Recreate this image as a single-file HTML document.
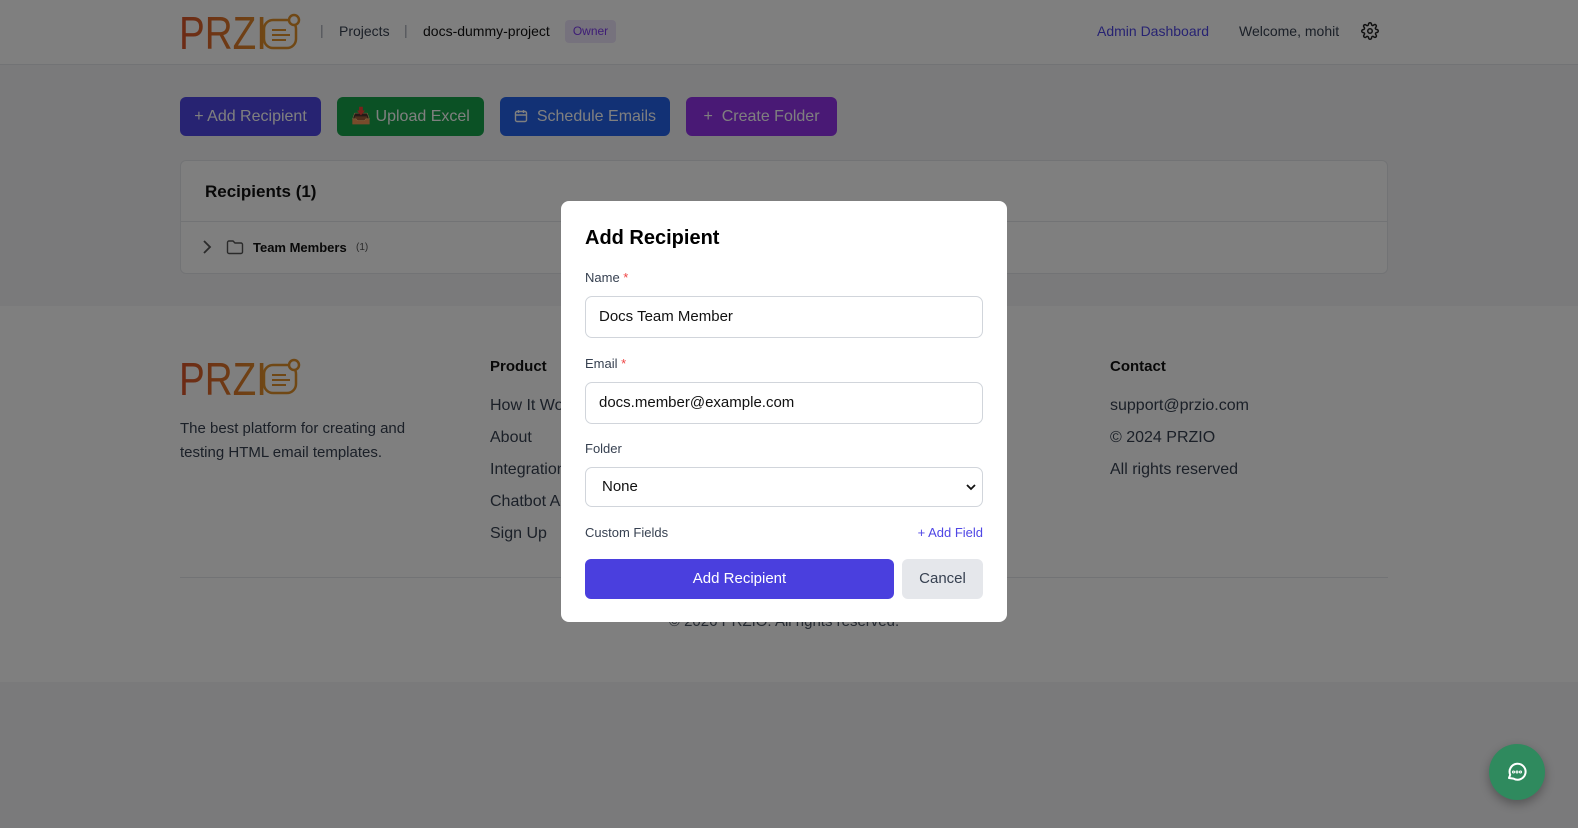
<!DOCTYPE html>
<html><head><meta charset="utf-8"><style>
*{box-sizing:border-box;margin:0;padding:0}
body{width:1578px;height:828px;overflow:hidden;font-family:"Liberation Sans",sans-serif;background:#f5f5f6;position:relative;color:#111}
.hdr{position:absolute;top:0;left:0;width:1578px;height:65px;background:#fff;border-bottom:1px solid #e5e7eb}
.logo{position:absolute;font-size:46px;line-height:46px;transform:scaleX(.84);transform-origin:left top;background:linear-gradient(90deg,#d9532a,#e0902a);-webkit-background-clip:text;color:transparent}
.abs{position:absolute;white-space:nowrap}
.btn{position:absolute;top:97px;height:39px;border-radius:6px;color:#fff;font-size:16px;line-height:39px;text-align:center}
.card{position:absolute;left:180px;top:160px;width:1208px;height:114px;background:#fff;border:1px solid #e5e7eb;border-radius:6px}
.footer{position:absolute;left:0;top:306px;width:1578px;height:376px;background:#fff}
.ov{position:absolute;inset:0;background:rgba(0,0,0,0.5)}
.modal{position:absolute;left:561px;top:201px;width:446px;height:421px;background:#fff;border-radius:8px}
.lbl{position:absolute;left:24px;font-size:13px;color:#374151}
.inp{position:absolute;left:24px;width:398px;height:42px;border:1px solid #d1d5db;border-radius:7px;font-size:15px;padding-left:13px;line-height:40px;color:#111}
.flink{font-size:16px;color:#374151}
</style></head><body>
<div class="hdr">
 <div class="logo abs" style="left:179px;top:10px">PRZI</div>
 <svg class="abs" style="left:262px;top:13px" width="40" height="37" viewBox="0 0 40 37"><rect x="2" y="7" width="32" height="28" rx="9" fill="none" stroke="#e0902a" stroke-width="2.5"/><circle cx="32" cy="7" r="5" fill="#fff" stroke="#e0902a" stroke-width="2.5"/><path d="M10 17h14M10 22h18M10 27h14" stroke="#e0902a" stroke-width="2"/></svg>
 <div class="abs" style="left:320px;top:22px;color:#9ca3af;font-size:14px">|</div>
 <div class="abs" style="left:339px;top:23px;color:#374151;font-size:14px">Projects</div>
 <div class="abs" style="left:404px;top:22px;color:#9ca3af;font-size:14px">|</div>
 <div class="abs" style="left:423px;top:23px;color:#111;font-size:14px">docs-dummy-project</div>
 <div class="abs" style="left:565px;top:20px;height:23px;width:51px;background:#ede4fb;border-radius:4px;color:#7c3aed;font-size:12px;text-align:center;line-height:23px">Owner</div>
 <div class="abs" style="left:1097px;top:23px;color:#4f46e5;font-size:14px">Admin Dashboard</div>
 <div class="abs" style="left:1239px;top:23px;color:#374151;font-size:14px">Welcome, mohit</div>
 <svg class="abs" style="left:1361px;top:22px" width="18" height="18" viewBox="0 0 24 24" fill="none" stroke="#222" stroke-width="2"><circle cx="12" cy="12" r="3"/><path d="M19.4 15a1.7 1.7 0 0 0 .3 1.8l.1.1a2 2 0 1 1-2.8 2.8l-.1-.1a1.7 1.7 0 0 0-1.8-.3 1.7 1.7 0 0 0-1 1.5V21a2 2 0 1 1-4 0v-.1a1.7 1.7 0 0 0-1.1-1.5 1.7 1.7 0 0 0-1.8.3l-.1.1a2 2 0 1 1-2.8-2.8l.1-.1a1.7 1.7 0 0 0 .3-1.8 1.7 1.7 0 0 0-1.5-1H3a2 2 0 1 1 0-4h.1a1.7 1.7 0 0 0 1.5-1.1 1.7 1.7 0 0 0-.3-1.8l-.1-.1a2 2 0 1 1 2.8-2.8l.1.1a1.7 1.7 0 0 0 1.8.3H9a1.7 1.7 0 0 0 1-1.5V3a2 2 0 1 1 4 0v.1a1.7 1.7 0 0 0 1 1.5 1.7 1.7 0 0 0 1.8-.3l.1-.1a2 2 0 1 1 2.8 2.8l-.1.1a1.7 1.7 0 0 0-.3 1.8V9a1.7 1.7 0 0 0 1.5 1H21a2 2 0 1 1 0 4h-.1a1.7 1.7 0 0 0-1.5 1z"/></svg>
</div>
<div class="btn" style="left:180px;width:141px;background:#4f46e5">+ Add Recipient</div>
<div class="btn" style="left:337px;width:147px;background:#16a34a">📥 Upload Excel</div>
<div class="btn" style="left:500px;width:170px;background:#2563eb"><svg style="vertical-align:-2px" width="14" height="14" viewBox="0 0 14 14" fill="none" stroke="#fff" stroke-width="1.4"><rect x="1.5" y="2.5" width="11" height="10" rx="1.5"/><path d="M1.5 6h11M4.5 1v3M9.5 1v3"/></svg>&nbsp; Schedule Emails</div>
<div class="btn" style="left:686px;width:151px;background:#9333ea">+ &nbsp;Create Folder</div>
<div class="card">
 <div class="abs" style="left:24px;top:21px;font-size:17px;font-weight:bold;color:#111">Recipients (1)</div>
 <div class="abs" style="left:0;top:60px;width:1206px;border-top:1px solid #e5e7eb"></div>
 <svg class="abs" style="left:20px;top:78px" width="12" height="16" viewBox="0 0 12 16"><path d="M3 2l6 6-6 6" fill="none" stroke="#555" stroke-width="1.8"/></svg>
 <svg class="abs" style="left:45px;top:78px" width="18" height="16" viewBox="0 0 18 16"><path d="M1.5 3.5a1.5 1.5 0 0 1 1.5-1.5h4l2 2h6a1.5 1.5 0 0 1 1.5 1.5v7.5a1.5 1.5 0 0 1-1.5 1.5H3a1.5 1.5 0 0 1-1.5-1.5z" fill="none" stroke="#555" stroke-width="1.4"/></svg>
 <div class="abs" style="left:72px;top:79px;font-size:13px;font-weight:bold;color:#111">Team Members</div>
 <div class="abs" style="left:175px;top:81px;font-size:10px;color:#555">(1)</div>
</div>
<div class="footer">
 <div class="logo abs" style="left:179px;top:50px">PRZI</div>
 <svg class="abs" style="left:262px;top:52px" width="40" height="37" viewBox="0 0 40 37"><rect x="2" y="7" width="32" height="28" rx="9" fill="none" stroke="#e0902a" stroke-width="2.5"/><circle cx="32" cy="7" r="5" fill="#fff" stroke="#e0902a" stroke-width="2.5"/><path d="M10 17h14M10 22h18M10 27h14" stroke="#e0902a" stroke-width="2"/></svg>
 <div class="abs" style="left:180px;top:111px;font-size:15px;line-height:24px;color:#374151">The best platform for creating and<br>testing HTML email templates.</div>
 <div class="abs" style="left:490px;top:52px;font-size:15px;font-weight:bold">Product</div>
 <div class="abs flink" style="left:490px;top:91px">How It Works</div>
 <div class="abs flink" style="left:490px;top:123px">About</div>
 <div class="abs flink" style="left:490px;top:155px">Integrations</div>
 <div class="abs flink" style="left:490px;top:187px">Chatbot Access</div>
 <div class="abs flink" style="left:490px;top:219px">Sign Up</div>
 <div class="abs" style="left:1110px;top:52px;font-size:15px;font-weight:bold">Contact</div>
 <div class="abs flink" style="left:1110px;top:91px">support@przio.com</div>
 <div class="abs flink" style="left:1110px;top:123px">© 2024 PRZIO</div>
 <div class="abs flink" style="left:1110px;top:155px">All rights reserved</div>
 <div class="abs" style="left:180px;top:271px;width:1208px;border-top:1px solid #e5e7eb"></div>
 <div class="abs" style="left:0;top:307px;width:1568px;text-align:center;font-size:15px;color:#4b5563">© 2026 PRZIO. All rights reserved.</div>
</div>
<div class="ov"></div>
<div class="modal">
 <div class="abs" style="left:24px;top:26px;font-size:20px;font-weight:bold;color:#000">Add Recipient</div>
 <div class="lbl" style="top:69px">Name <span style="color:#ef4444">*</span></div>
 <div class="inp" style="top:95px">Docs Team Member</div>
 <div class="lbl" style="top:155px">Email <span style="color:#ef4444">*</span></div>
 <div class="inp" style="top:181px">docs.member@example.com</div>
 <div class="lbl" style="top:240px">Folder</div>
 <div class="inp" style="top:266px;height:40px;padding-left:16px;line-height:38px">None
  <svg class="abs" style="right:6px;top:15px" width="10" height="8" viewBox="0 0 10 8"><path d="M1 2l4 4 4-4" fill="none" stroke="#111" stroke-width="1.8"/></svg></div>
 <div class="lbl" style="top:324px">Custom Fields</div>
 <div class="abs" style="right:24px;top:324px;font-size:13px;color:#4f46e5">+ Add Field</div>
 <div class="abs" style="left:24px;top:358px;width:309px;height:40px;background:#4a3fde;border-radius:6px;color:#fff;font-size:15px;text-align:center;line-height:40px">Add Recipient</div>
 <div class="abs" style="left:341px;top:358px;width:81px;height:40px;background:#e5e7eb;border-radius:6px;color:#374151;font-size:15px;text-align:center;line-height:40px">Cancel</div>
</div>
<div class="abs" style="left:1489px;top:744px;width:56px;height:56px;border-radius:50%;background:#2f8a5e;box-shadow:0 4px 10px rgba(0,0,0,.3)">
 <svg class="abs" style="left:16px;top:16px" width="24" height="24" viewBox="0 0 24 24" fill="none" stroke="#fff" stroke-width="2"><path d="M4 18l1.2-3.2A8 8 0 1 1 8.5 18.6z" stroke-linejoin="round"/><circle cx="8.5" cy="12" r=".5"/><circle cx="12" cy="12" r=".5"/><circle cx="15.5" cy="12" r=".5"/></svg>
</div>
</body></html>
